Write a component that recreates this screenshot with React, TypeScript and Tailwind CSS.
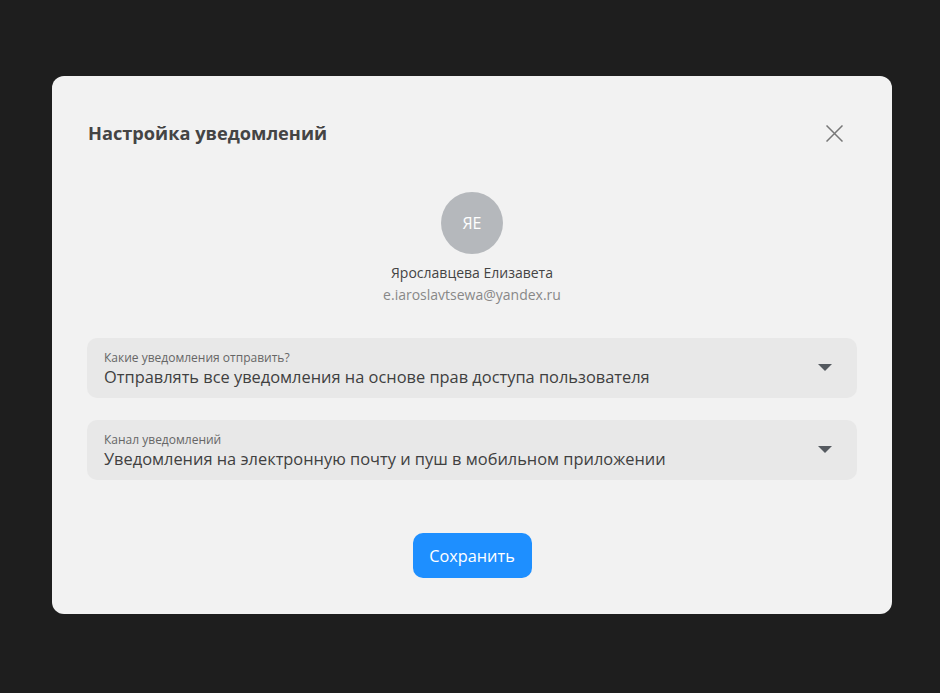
function Caret() {
  return (
    <svg width="14" height="8" viewBox="0 0 14 8" className="shrink-0">
      <path d="M0 0 H14 L7 7 Z" fill="#555a60" />
    </svg>
  )
}

function SelectField({ label, value }: { label: string; value: string }) {
  return (
    <div className="flex items-center h-[60px] rounded-[10px] bg-[#e8e8e8] pl-[17px] pr-[25px]">
      <div className="flex-1 flex flex-col pt-[2px]">
        <span className="text-[12px] leading-[16px] text-[#666]">{label}</span>
        <span className="text-[16.4px] leading-[22px] text-[#404040]">{value}</span>
      </div>
      <Caret />
    </div>
  )
}

export default function App() {
  return (
    <div
      className="min-h-[693px] w-full bg-[#1e1e1e] pt-[76px] pl-[52px]"
      style={{ fontFamily: '"Open Sans", "Noto Sans", sans-serif' }}
    >
      <div className="w-[840px] rounded-[12px] bg-[#f2f2f2] h-[538px] px-[35px] pt-[42px]">
        {/* Header */}
        <div className="flex items-center justify-between h-[30px]">
          <h2 className="text-[18.2px] font-bold text-[#444] pl-[1px] pt-[1px]">Настройка уведомлений</h2>
          <button className="mr-[14px] text-[#777]">
            <svg width="17" height="17" viewBox="0 0 17 17" stroke="currentColor" strokeWidth="1.5">
              <path d="M0.5 0.5 L16.5 16.5 M16.5 0.5 L0.5 16.5" />
            </svg>
          </button>
        </div>

        {/* User */}
        <div className="flex flex-col items-center mt-[44px]">
          <div className="w-[62px] h-[62px] rounded-full bg-[#b5b8bc] flex items-center justify-center text-white text-[16px]">
            ЯЕ
          </div>
          <div className="mt-[8px] text-[14px] leading-[22px] text-[#444]">Ярославцева Елизавета</div>
          <div className="text-[14px] leading-[22px] text-[#888]">e.iaroslavtsewa@yandex.ru</div>
        </div>

        {/* Fields */}
        <div className="mt-[32px] flex flex-col gap-[22px]">
          <SelectField
            label="Какие уведомления отправить?"
            value="Отправлять все уведомления на основе прав доступа пользователя"
          />
          <SelectField
            label="Канал уведомлений"
            value="Уведомления на электронную почту и пуш в мобильном приложении"
          />
        </div>

        <div className="flex justify-center mt-[53px]">
          <button className="h-[45px] w-[119px] rounded-[10px] bg-[#1e8fff] text-white text-[16.3px] pt-[1px]">
            Сохранить
          </button>
        </div>
      </div>
    </div>
  )
}
